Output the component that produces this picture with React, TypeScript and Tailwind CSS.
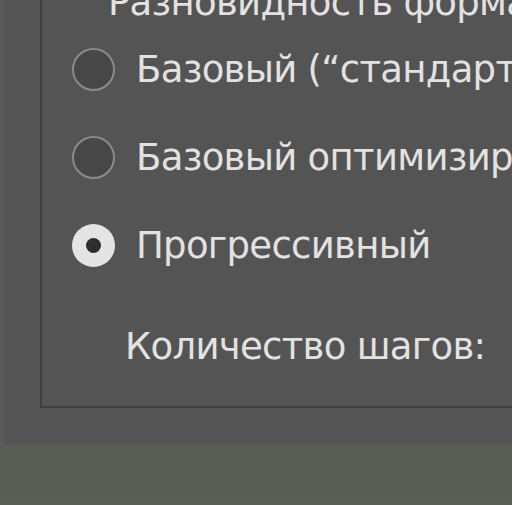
const font = { fontFamily: '"DejaVu Sans", Verdana, sans-serif' }

function Radio({ checked }: { checked?: boolean }) {
  if (checked) {
    return (
      <div className="w-[43px] h-[43px] rounded-full bg-[#e4e4e4] flex items-center justify-center shrink-0">
        <div className="w-[15px] h-[15px] rounded-full bg-[#2e2e2e]" />
      </div>
    )
  }
  return <div className="w-[43px] h-[43px] rounded-full bg-[#474747] border-2 border-[#8a8a8a] shrink-0" />
}

export default function App() {
  const rows = [
    { label: 'Базовый (“стандарт', checked: false },
    { label: 'Базовый оптимизир', checked: false },
    { label: 'Прогрессивный', checked: true },
  ]
  return (
    <div className="w-[512px] h-[505px] overflow-hidden bg-gradient-to-b from-[#4a4e47] to-[#5a5f56]" style={font}>
      <div className="h-[445px] bg-[#545454] border-l-[4px] border-[#585c58] pl-[36px] pb-[37px]">
        <div className="h-full border-l-2 border-b-2 border-[#3f3f3f] text-[#e2e2e2] whitespace-nowrap overflow-hidden tracking-[-0.7px]">
          <div className="text-[37px] leading-none mt-[-16px] pl-[66px]">Разновидность формата</div>
          <div className="flex flex-col gap-[45px] mt-[27px] pl-[30px]">
            {rows.map((r) => (
              <div key={r.label} className="flex items-center gap-[21px] text-[37px] leading-none">
                <Radio checked={r.checked} />
                <span>{r.label}</span>
              </div>
            ))}
          </div>
          <div className="text-[37px] leading-none mt-[61px] pl-[83px]">Количество шагов:</div>
        </div>
      </div>
    </div>
  )
}
